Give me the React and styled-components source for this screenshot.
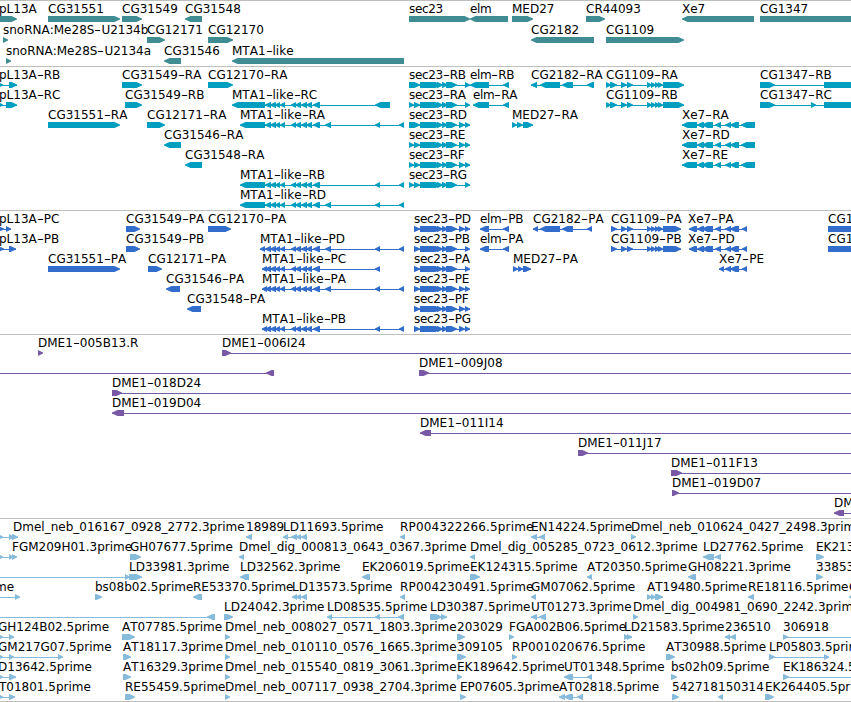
import React from 'react';
import styled, { createGlobalStyle } from 'styled-components';

const VIEW_WIDTH = 851;
const BAR_TOP = 13;
const BAR_HEIGHT = 6;

const GlobalStyle = createGlobalStyle`
  body {
    margin: 0;
    background: #ffffff;
    overflow: hidden;
  }
`;

const Browser = styled.main`
  display: flex;
  flex-direction: column;
  box-sizing: border-box;
  width: ${VIEW_WIDTH}px;
  height: 702px;
  overflow: hidden;
  border-bottom: 1px solid #bebebe;
  background: #ffffff;
  color: #000000;
  font-family: 'DejaVu Sans', sans-serif;
  font-size: 12px;
  font-kerning: none;
`;

const Track = styled.section`
  display: flex;
  flex-direction: column;
  flex: none;
  border-top: 1px solid #bebebe;
  padding-top: 2px;
  padding-bottom: ${(p) => p.$gap}px;
  color: ${(p) => p.$color};
`;

const Lane = styled.div`
  position: relative;
  height: ${(p) => p.$height}px;
`;

const Marks = styled.svg`
  display: block;
  width: ${VIEW_WIDTH}px;
  height: 20px;
  fill: currentColor;
`;

/* Feature names sit at their genomic coordinate on the lane. */
const Name = styled.span.attrs((p) => ({ style: { left: p.$x } }))`
  position: absolute;
  top: -1px;
  line-height: 14px;
  white-space: pre;
  letter-spacing: ${(p) => p.$spacing}px;
  color: #000000;
`;

const Hyphen = styled.span`
  display: inline-block;
  width: 7px;
  line-height: 14px;
  letter-spacing: 0;
  transform: scaleX(1.6);
  transform-origin: 0 50%;
`;

function spacingOf(name) {
  if (/^(sec|elm)/.test(name)) return -0.35;
  if (/^RP0/.test(name)) return 0.16;
  return 0;
}

function Label({ name, x }) {
  return (
    <Name $x={x} $spacing={spacingOf(name)}>
      {name.split(/(-)/).map((part, i) => (part === '-' ? <Hyphen key={i}>-</Hyphen> : part))}
    </Name>
  );
}

function blockPath([from, to], dir) {
  const head = Math.min(to - from, 5.5);
  const mid = BAR_TOP + BAR_HEIGHT / 2;
  const bottom = BAR_TOP + BAR_HEIGHT;
  if (dir === 'L') {
    return `M${to} ${BAR_TOP}H${from + head}L${from} ${mid - 0.5}V${mid + 0.5}L${from + head} ${bottom}H${to}Z`;
  }
  return `M${from} ${BAR_TOP}H${to - head}L${to} ${mid - 0.5}V${mid + 0.5}L${to - head} ${bottom}H${from}Z`;
}

function Feature({ dir, blocks, line }) {
  const start = line ? line[0] : blocks[0][0];
  const end = line ? line[1] : blocks[blocks.length - 1][1];
  return (
    <g>
      {(line || blocks.length > 1) && (
        <rect x={start} y={BAR_TOP + 3} width={end - start} height="1" />
      )}
      {blocks.map((b, i) => (
        <path key={i} d={blockPath(b, dir)} />
      ))}
    </g>
  );
}

// A feature is [name, label x, direction, blocks, optional line extent].
const f = (name, x, dir, blocks, line) => ({ name, x, dir, blocks, line });
const one = (name, x, dir, end) => f(name, x, dir, [[x, end]]);

const END = VIEW_WIDTH;
const secMid = [[420, 441], [437, 443], [442, 448], [446, 457]];
const secTail2 = [[459, 465], [465, 470]];
const secTail1 = [[465, 470]];
const secBlock = [[409, 420]];
const secPair = [[409, 414], [414, 420]];
const cgMid = [[621, 627], [627, 633], [647, 652], [651, 656], [655, 660], [658, 663]];
const cgR = [[606, 611], [610, 617], ...cgMid, [663, 684]];
const cgP = [[611, 617], ...cgMid, [663, 681]];
const xeMid = [[697, 704], [702, 713], [715, 721], [725, 731], [730, 739]];
const xeR = [[682, 697], ...xeMid, [741, 755]];
const xeP = [[689, 697], ...xeMid, [742, 747]];
const mta = [[265, 271], [270, 276], [275, 280], [280, 285], [291, 296], [295, 301], [301, 307], [306, 312], [313, 320]];
const far = [[375, 380], [399, 404]];
const cg2182 = [[540, 560], [562, 573]];

const genes = [
  [
    f('pL13A', -1, 'R', [[-5, 17]]), one('CG31551', 48, 'R', 120), one('CG31549', 122, 'R', 142),
    one('CG31548', 185, 'L', 202), one('sec23', 409, 'R', 470), one('elm', 470, 'L', 508),
    one('MED27', 512, 'R', 533), one('CR44093', 586, 'R', 605), one('Xe7', 682, 'L', 754),
    one('CG1347', 760, 'R', 870),
  ],
  [
    one('snoRNA:Me28S-U2134b', 3, 'R', 8), one('CG12171', 147, 'R', 165), one('CG12170', 208, 'R', 233),
    one('CG2182', 531, 'L', 594), one('CG1109', 606, 'R', 684),
  ],
  [
    one('snoRNA:Me28S-U2134a', 6, 'R', 11), one('CG31546', 164, 'L', 181), one('MTA1-like', 232, 'L', 404),
  ],
];

const transcripts = [
  [
    f('pL13A-RB', -1, 'R', [[-2, 3], [9, 17]]), one('CG31549-RA', 122, 'R', 142), one('CG12170-RA', 208, 'R', 233),
    f('sec23-RB', 409, 'R', [...secBlock, ...secMid, ...secTail1]),
    f('elm-RB', 470, 'L', [[470, 489], [503, 509]]),
    f('CG2182-RA', 531, 'L', [[531, 537], ...cg2182, [587, 594]]),
    f('CG1109-RA', 606, 'R', cgR), f('CG1347-RB', 760, 'R', [[760, 775], [824, 870]]),
  ],
  [
    f('pL13A-RC', -1, 'R', [[-2, 3], [6, 17]]), one('CG31549-RB', 125, 'R', 142),
    f('MTA1-like-RC', 232, 'L', [[232, 265], ...mta, [375, 390]]),
    f('sec23-RA', 409, 'R', [...secPair, ...secMid, ...secTail1]),
    f('elm-RA', 473, 'L', [[473, 489], [503, 509]]),
    f('CG1109-RB', 606, 'R', cgR), f('CG1347-RC', 760, 'R', [[760, 775], [811, 816], [824, 870]]),
  ],
  [
    one('CG31551-RA', 48, 'R', 120), one('CG12171-RA', 147, 'R', 165),
    f('MTA1-like-RA', 240, 'L', [[240, 265], ...mta, [325, 331], ...far]),
    f('sec23-RD', 409, 'R', [...secBlock, ...secMid, ...secTail2]),
    f('MED27-RA', 512, 'R', [[512, 517], [517, 523], [523, 533]]),
    f('Xe7-RA', 682, 'L', xeR),
  ],
  [
    one('CG31546-RA', 164, 'L', 181),
    f('sec23-RE', 409, 'R', [...secPair, ...secMid, ...secTail2]),
    f('Xe7-RD', 682, 'L', xeR),
  ],
  [
    one('CG31548-RA', 185, 'L', 202),
    f('sec23-RF', 409, 'R', [...secPair, ...secMid, ...secTail2]),
    f('Xe7-RE', 682, 'L', xeR),
  ],
  [
    f('MTA1-like-RB', 240, 'L', [[240, 265], ...mta, ...far]),
    f('sec23-RG', 409, 'R', [...secPair, ...secMid, ...secTail1]),
  ],
  [f('MTA1-like-RD', 240, 'L', [[240, 265], ...mta, [325, 331], ...far])],
];

const proteins = [
  [
    f('pL13A-PC', -1, 'R', [[-2, 4], [6, 11]]), one('CG31549-PA', 126, 'R', 140), one('CG12170-PA', 208, 'R', 231),
    f('sec23-PD', 414, 'R', [[414, 420], ...secMid, ...secTail2]),
    f('elm-PB', 480, 'L', [[480, 489], [503, 509]]),
    f('CG2182-PA', 533, 'L', [[533, 538], ...cg2182, [587, 592]]),
    f('CG1109-PA', 611, 'R', cgP), f('Xe7-PA', 688, 'L', xeP), one('CG1347-PB', 828, 'R', 870),
  ],
  [
    f('pL13A-PB', -1, 'R', [[-2, 4], [9, 16]]), one('CG31549-PB', 126, 'R', 140),
    f('MTA1-like-PD', 260, 'L', [[260, 265], ...mta, [325, 331], ...far]),
    f('sec23-PB', 414, 'R', [[414, 420], ...secMid, ...secTail1]),
    f('elm-PA', 480, 'L', [[480, 489], [503, 509]]),
    f('CG1109-PB', 611, 'R', cgP), f('Xe7-PD', 688, 'L', xeP), one('CG1347-PC', 828, 'R', 870),
  ],
  [
    one('CG31551-PA', 48, 'R', 120), one('CG12171-PA', 148, 'R', 162),
    f('MTA1-like-PC', 262, 'L', [[262, 267], ...mta, [375, 380]]),
    f('sec23-PA', 414, 'R', [[414, 420], ...secMid, ...secTail1]),
    f('MED27-PA', 513, 'R', [[513, 518], [518, 523], [523, 531]]),
    f('Xe7-PE', 719, 'L', [[719, 724], [725, 731], [730, 739], [742, 747]]),
  ],
  [
    one('CG31546-PA', 166, 'L', 180),
    f('MTA1-like-PA', 262, 'L', [[262, 267], ...mta, [325, 331], ...far]),
    f('sec23-PE', 414, 'R', [[414, 420], ...secMid, ...secTail2]),
  ],
  [
    one('CG31548-PA', 187, 'L', 201),
    f('sec23-PF', 414, 'R', [[414, 420], ...secMid, ...secTail2]),
  ],
  [
    f('MTA1-like-PB', 262, 'L', [[262, 267], ...mta, ...far]),
    f('sec23-PG', 414, 'R', [[414, 420], ...secMid, ...secTail2]),
  ],
];

const clones = [
  [one('DME1-005B13.R', 38, 'R', 43), f('DME1-006I24', 222, 'R', [[222, 231]], [222, END])],
  [f('', 0, 'L', [[266, 274]], [0, 274]), f('DME1-009J08', 419, 'R', [[419, 429]], [419, END])],
  [f('DME1-018D24', 112, 'R', [[112, 122]], [112, END])],
  [f('DME1-019D04', 112, 'L', [[112, 124]], [112, END])],
  [f('DME1-011I14', 420, 'L', [[420, 431]], [420, END])],
  [f('DME1-011J17', 578, 'R', [[578, 588]], [578, END])],
  [f('DME1-011F13', 671, 'R', [[671, 682]], [671, END])],
  [f('DME1-019D07', 672, 'R', [[672, 679]], [672, END])],
  [f('DME1', 834, 'L', [[834, 844]], [834, END])],
];

const ests = [
  [
    f('Dmel_neb_016167_0928_2772.3prime', 13, 'R', [[-2, 3], [9, 14], [12, 18]]),
    one('18989', 246, 'L', 252),
    f('LD11693.5prime', 283, 'L', [[283, 288], [291, 297], [296, 301], [301, 307]]),
    one('RP004322266.5prime', 400, 'L', 405),
    f('EN14224.5prime', 531, 'L', [[531, 537], [539, 545]]),
    one('Dmel_neb_010624_0427_2498.3prime', 631, 'R', 636),
  ],
  [
    f('FGM209H01.3prime', 12, 'R', [[-2, 3], [9, 13], [12, 17]]),
    one('GH07677.5prime', 130, 'R', 141),
    one('Dmel_dig_000813_0643_0367.3prime', 239, 'L', 244),
    one('Dmel_dig_005285_0723_0612.3prime', 470, 'L', 475),
    f('LD27762.5prime', 703, 'L', [[703, 714], [715, 721]]),
    one('EK213', 816, 'R', 824),
  ],
  [
    f('LD33981.3prime', 129, 'R', [[125, 130], [129, 142]], [0, 142]),
    one('LD32562.3prime', 240, 'L', 249), one('EK206019.5prime', 362, 'L', 370),
    one('EK124315.5prime', 470, 'R', 480), one('AT20350.5prime', 587, 'L', 592),
    one('GH08221.3prime', 688, 'L', 696), one('33853', 816, 'R', 823),
  ],
  [
    f('me', -5, 'R', [[15, 20]], [0, 20]), one('bs08b02.5prime', 95, 'R', 102),
    one('RE53370.5prime', 193, 'L', 202),
    f('LD13573.5prime', 292, 'L', [[292, 297], [296, 301], [301, 307]]),
    one('RP004230491.5prime', 400, 'L', 405), one('GM07062.5prime', 531, 'L', 536),
    f('AT19480.5prime', 647, 'R', [[647, 652], [651, 656], [655, 663]]),
    one('RE18116.5prime', 748, 'L', 754), one('G', 849, 'L', 855),
  ],
  [
    f('', 0, 'L', [[207, 215]], [0, 215]),
    one('LD24042.3prime', 224, 'R', 233),
    f('LD08535.5prime', 327, 'L', [[327, 332], [375, 380], [398, 404]]),
    f('LD30387.5prime', 430, 'R', [[430, 442], [441, 447]]),
    f('UT01273.3prime', 531, 'L', [[531, 537], [539, 546]]),
    one('Dmel_dig_004981_0690_2242.3prime', 633, 'R', 638),
  ],
  [
    f('GH124B02.5prime', -2, 'R', [[-2, 3], [9, 14]]), one('AT07785.5prime', 122, 'R', 135),
    one('Dmel_neb_008027_0571_1803.3prime', 225, 'R', 230), one('203029', 457, 'R', 465),
    one('FGA002B06.5prime', 509, 'R', 514),
    f('LD21583.5prime', 624, 'R', [[624, 629], [627, 632]]),
    f('236510', 725, 'L', [[725, 730], [730, 736]]),
    f('306918', 783, 'R', [[783, 788]], [783, END]),
  ],
  [
    f('GM217G07.5prime', -2, 'R', [[-2, 3], [9, 14], [58, 63]]), one('AT18117.3prime', 123, 'R', 131),
    one('Dmel_neb_010110_0576_1665.3prime', 225, 'R', 230), one('309105', 457, 'R', 466),
    one('RP001020676.5prime', 512, 'R', 517), one('AT30988.5prime', 666, 'R', 675),
    f('LP05803.5prime', 769, 'R', [[769, 775], [824, 829]]),
  ],
  [
    f('D13642.5prime', -2, 'R', [[-2, 3], [9, 16]]), one('AT16329.3prime', 123, 'R', 131),
    one('Dmel_neb_015540_0819_3061.3prime', 225, 'R', 230), one('EK189642.5prime', 457, 'R', 462),
    f('UT01348.5prime', 564, 'L', [[564, 573], [587, 592]]), one('bs02h09.5prime', 671, 'R', 677),
    f('EK186324.5prime', 783, 'R', [[783, 789]], [783, END]),
  ],
  [
    f('T01801.5prime', -1, 'R', [[-2, 3], [9, 15]]), one('RE55459.5prime', 125, 'R', 135),
    one('Dmel_neb_007117_0938_2704.3prime', 225, 'R', 230), one('EP07605.3prime', 460, 'R', 466),
    f('AT02818.5prime', 559, 'L', [[559, 565], [564, 573], [577, 583]]),
    one('542718', 672, 'R', 679), one('150314', 718, 'L', 723), one('EK264405.5prime', 765, 'R', 774),
  ],
];

const tracks = [
  { id: 'genes', color: '#3f8d93', lanes: genes, laneHeight: 21, gap: 0 },
  { id: 'transcripts', color: '#009ebf', lanes: transcripts, laneHeight: 20, gap: 1 },
  { id: 'proteins', color: '#336dcb', lanes: proteins, laneHeight: 20, gap: 1 },
  { id: 'clones', color: '#7859a6', lanes: clones, laneHeight: 20, gap: 1 },
  { id: 'ests', color: '#87bbdc', lanes: ests, laneHeight: 20, gap: 0 },
];

export default function App() {
  return (
    <>
      <GlobalStyle />
      <Browser>
        {tracks.map((t) => (
          <Track key={t.id} $color={t.color} $gap={t.gap}>
            {t.lanes.map((lane, i) => (
              <Lane key={i} $height={t.laneHeight}>
                <Marks aria-hidden="true">
                  {lane.map((ft, j) => (
                    <Feature key={j} {...ft} />
                  ))}
                </Marks>
                {lane.map((ft, j) => ft.name && <Label key={j} name={ft.name} x={ft.x} />)}
              </Lane>
            ))}
          </Track>
        ))}
      </Browser>
    </>
  );
}
